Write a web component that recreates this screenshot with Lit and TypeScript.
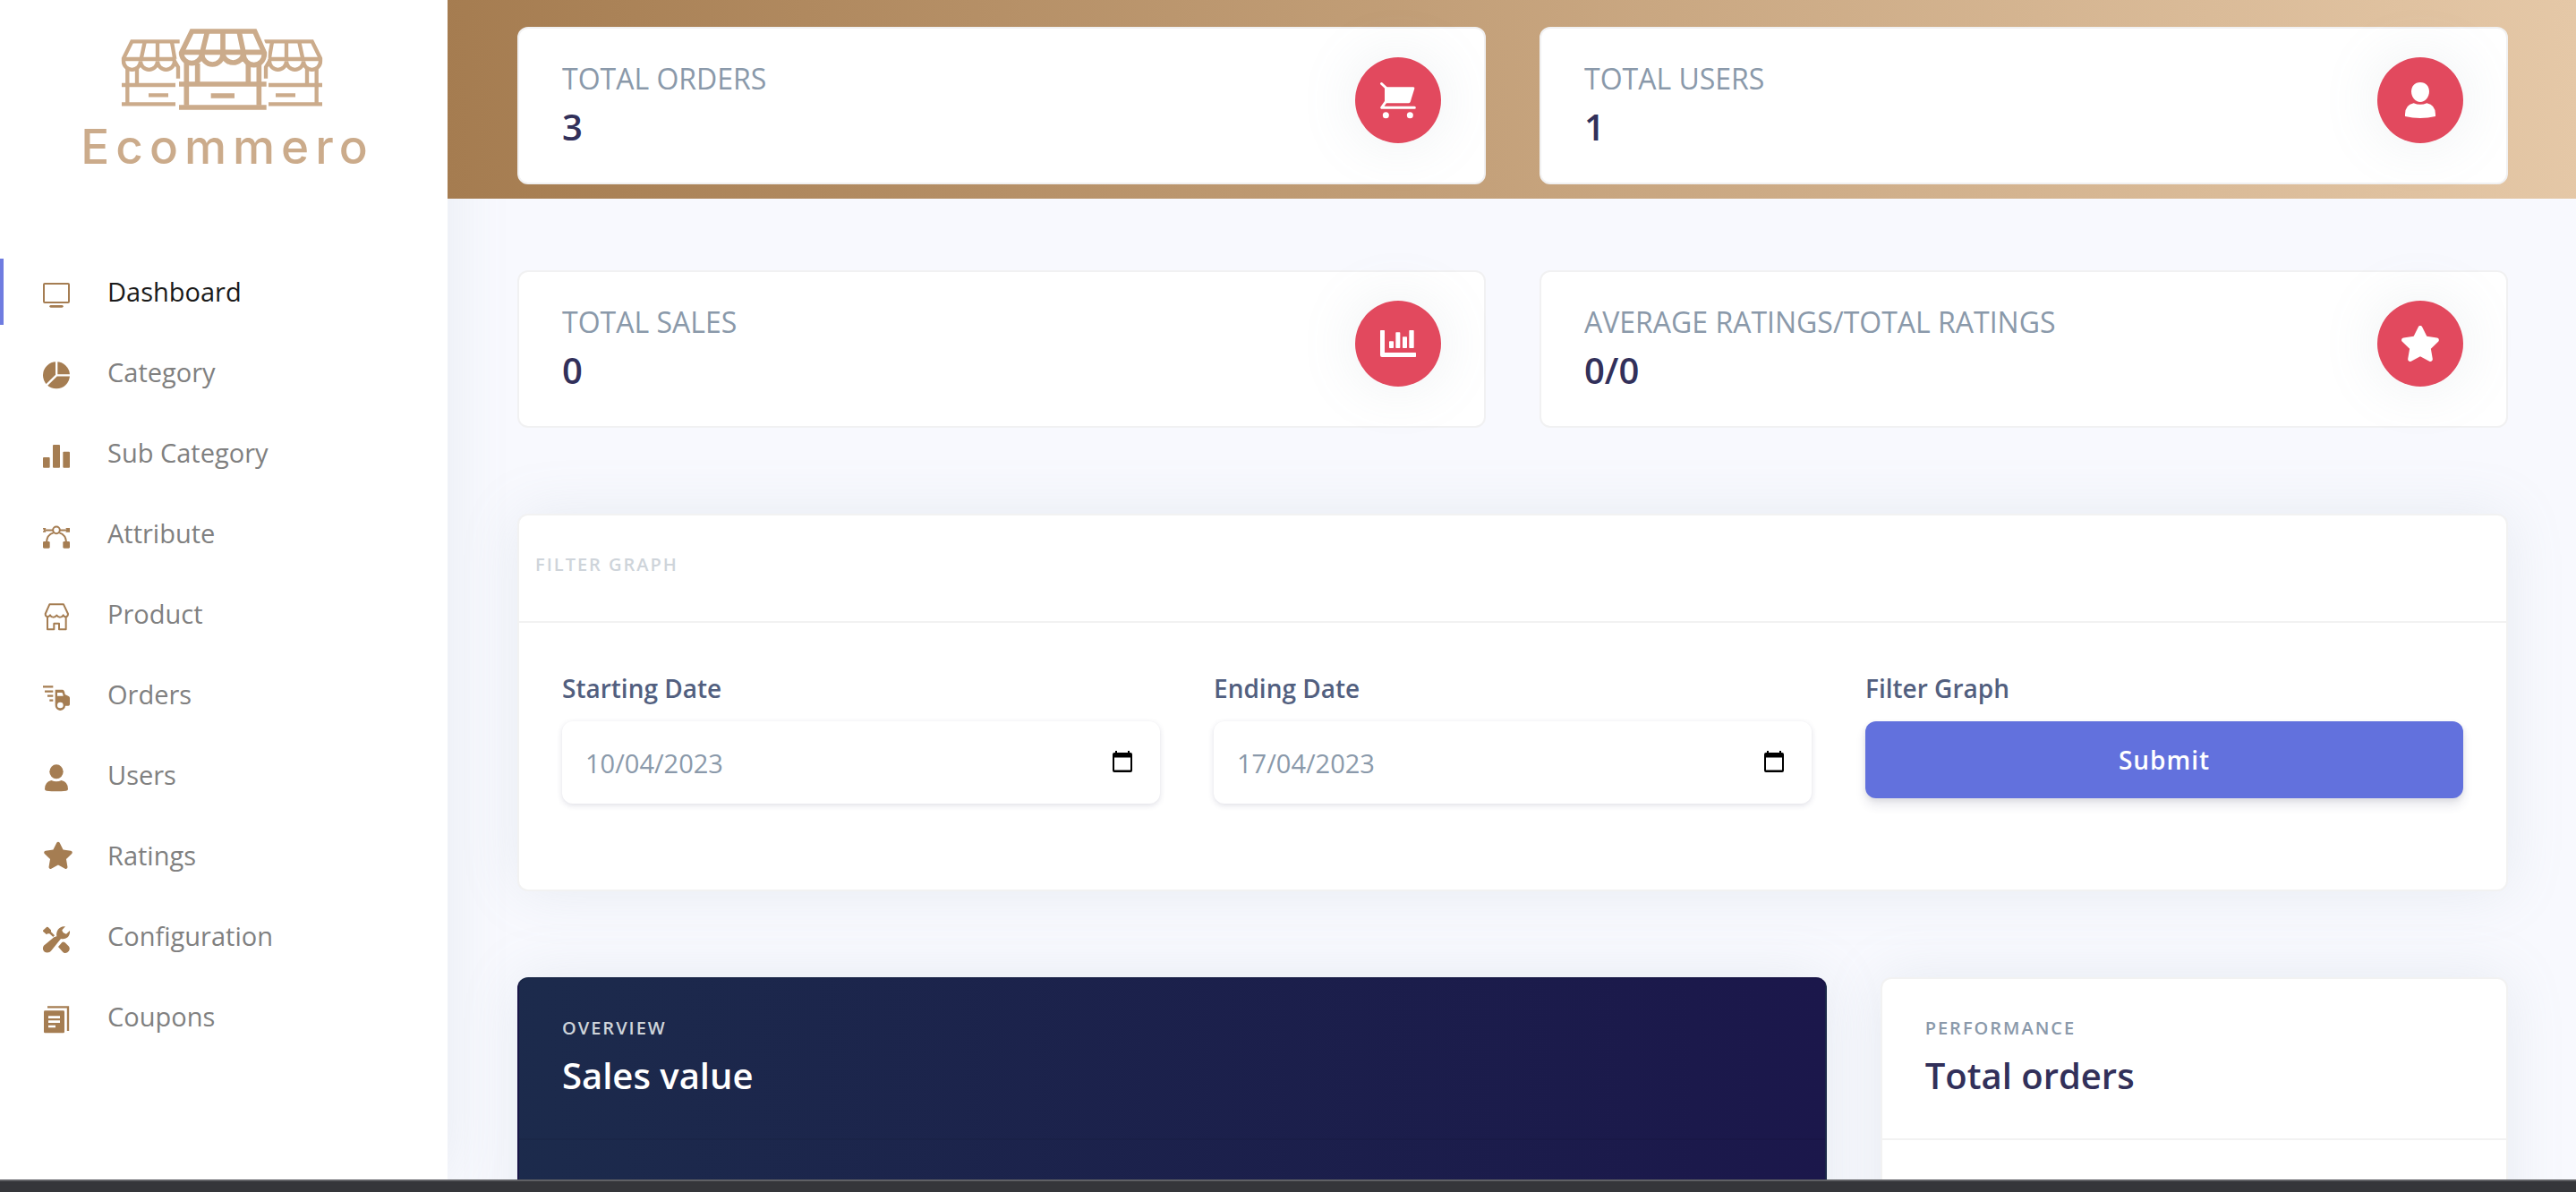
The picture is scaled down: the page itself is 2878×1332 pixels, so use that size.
import { LitElement, html, css, svg, nothing } from "lit";
import type { SVGTemplateResult } from "lit";
import { customElement, property, state } from "lit/decorators.js";
import { classMap } from "lit/directives/class-map.js";

const STAR_PATH =
  "M259.3 17.8L194 150.2 47.9 171.5c-26.2 3.8-36.7 36.1-17.7 54.6l105.7 103-25 145.5c-4.5 26.3 23.2 46 46.4 33.7L288 439.6l130.7 68.7c23.2 12.2 50.9-7.4 46.4-33.7l-25-145.5 105.7-103c19-18.5 8.5-50.8-17.7-54.6L382 150.2 316.7 17.8c-11.7-23.6-45.6-23.9-57.4 0z";

/* Sidebar icons share a 90 x 90 box. */
const navIcons: Record<string, SVGTemplateResult> = {
  screen: svg`
    <rect x="3" y="6" width="84" height="63" rx="3" fill="none" stroke="currentColor" stroke-width="6"/>
    <path d="M26 82H64" stroke="currentColor" stroke-width="8" stroke-linecap="round"/>`,
  pie: svg`
    <circle cx="45" cy="43" r="45" fill="currentColor"/>
    <path d="M45.500 -6V43H96M45.500 43L8 80" fill="none" stroke="#fff" stroke-width="7"/>`,
  bars: svg`
    <g fill="currentColor">
      <rect x="0" y="48" width="23" height="35" rx="3"/>
      <rect x="33" y="6" width="24" height="77" rx="3"/>
      <rect x="67" y="29" width="23" height="54" rx="3"/>
    </g>`,
  vector: svg`
    <g fill="none" stroke="currentColor" stroke-width="6">
      <circle cx="45" cy="22" r="11.500"/>
      <path d="M8 22.500H34M56 22.500H82"/>
      <path d="M12 62C13 46 22 35 35 31M78 62C77 46 68 35 55 31"/>
    </g>
    <g fill="currentColor">
      <path d="M0 15H10L8 22L10 29H0V26L4 22L0 19Z"/>
      <path d="M76 15H90V29H76L80 22Z"/>
      <rect x="0" y="60" width="23" height="23" rx="4"/>
      <rect x="67" y="60" width="23" height="23" rx="4"/>
    </g>`,
  shop: svg`
    <g fill="none" stroke="currentColor" stroke-width="6" stroke-linejoin="round">
      <path d="M22 1H69L84 33C84 44 72 46 68 37C64 46 52 46 46 38C40 46 28 46 24 37C19 46 8 43 8 33Z"/>
      <path d="M15 42V85H37V65H54V85H77V42"/>
    </g>`,
  truck: svg`
    <path d="M0 7H34M6 23H34M15 38H34M22 53H34" stroke="currentColor" stroke-width="7"/>
    <path fill="currentColor" fill-rule="evenodd"
      d="M41 17H65Q72 17 74 33L86 39Q90 41 90 45V66Q90 71 85 71H75A17 17 0 0 1 41 69ZM48 27V38H68L66 29Q65 27 62 27ZM58 59A10 10 0 1 0 58 79A10 10 0 1 0 58 59Z"/>`,
  user: svg`
    <g fill="currentColor">
      <ellipse cx="45" cy="22" rx="23" ry="24"/>
      <path d="M28 51Q45 59 62 51Q84 56 84 80Q84 85 78 86Q45 90 12 86Q6 85 6 80Q6 56 28 51Z"/>
    </g>`,
  star: svg`<path fill="currentColor" transform="translate(0 -13) scale(0.177)" d="${STAR_PATH}"/>`,
  tools: svg`
    <g fill="currentColor">
      <path d="M13 2L17 3L27 13V19L39 31L34 36L22 25H16L12 28L0 17V14Z"/>
      <path d="M46 34C42 14 58 -3 75 1L64 13Q66 24 78 26L90 15C92 34 78 46 60 42L28 82C20 92 4 91 0 78C-1 70 2 65 8 61L37 37Z"/>
      <path d="M51 69L64 54Q68 51 73 54L86 67C95 77 84 92 72 90Q69 89 67 87Z"/>
    </g>`,
  copies: svg`
    <path d="M15 1H84V81" fill="none" stroke="currentColor" stroke-width="7"/>
    <rect x="3" y="13" width="69" height="75" rx="4" fill="currentColor"/>
    <path d="M18 35H57M18 50H57M18 66H42" stroke="#fff" stroke-width="8"/>`,
};

/* Badge icons share a 120 x 120 box. */
const statIcons: Record<string, SVGTemplateResult> = {
  cart: svg`
    <g fill="none" stroke="currentColor" stroke-width="9" stroke-linecap="round" stroke-linejoin="round">
      <path d="M4.500 4.500L19 18"/>
      <path d="M18 66L5 85H115"/>
    </g>
    <path fill="currentColor" d="M15 16H111Q116 16 115 21L101 66Q99 70 95 70H15Z"/>
    <circle cx="19" cy="110" r="10.500" fill="currentColor"/>
    <circle cx="100" cy="110" r="10.500" fill="currentColor"/>`,
  user: svg`
    <g fill="currentColor">
      <path d="M60 0C79 0 90 13 90 31C90 50 76 66 60 66C44 66 30 50 30 31C30 13 41 0 60 0Z"/>
      <path d="M38 70Q60 79 82 70Q111 76 111 107V114Q86 120 60 120Q34 120 9 114V107Q9 76 38 70Z"/>
    </g>`,
  chart: svg`
    <g fill="currentColor">
      <path d="M2 15H13Q15 15 15 17V90H118Q120 90 120 92V103Q120 105 118 105H6Q0 105 0 99V17Q0 15 2 15Z"/>
      <rect x="30" y="52" width="15" height="23" rx="2"/>
      <rect x="52" y="22" width="15" height="53" rx="2"/>
      <rect x="75" y="37" width="15" height="38" rx="2"/>
      <rect x="97" y="15" width="16" height="60" rx="2"/>
    </g>`,
  star: svg`<path fill="currentColor" transform="translate(-7.400 0) scale(0.234)" d="${STAR_PATH}"/>`,
};

const sideShop = svg`
  <g stroke-width="13">
    <path d="M422 108H262L234 165V174A28 28 0 0 0 291 174A28 28 0 0 0 348 174A28 28 0 0 0 405 174L417 194V232"/>
    <path d="M232 167H410M305 110L293 167M348 110V167M396 110L406 167"/>
    <path d="M247 196V316M279 198V250"/>
    <path d="M228 254H408M228 318H408M318 288H384"/>
  </g>`;

@customElement("brand-logo")
export class BrandLogo extends LitElement {
  static styles = css`
    .brand {
      display: flex;
      flex-direction: column;
      align-items: center;
      gap: 8px;
      padding-right: 4px;
      color: #cbab8b;
      text-decoration: none;
    }
    .mark {
      width: 224px;
      height: 92px;
      overflow: visible;
    }
    .name {
      padding-left: 12px;
      font: 500 53px/64px Inter, "Liberation Sans", sans-serif;
      letter-spacing: 7px;
    }
  `;

  render() {
    return html`
      <a class="brand" href="#dashboard">
        <svg class="mark" viewBox="228 65 672 276" fill="none" stroke="currentColor" aria-hidden="true">
          ${sideShop}
          <g transform="translate(1128 0) scale(-1 1)">${sideShop}</g>
          <path d="M414 130L454 60H680L719 130V165L696 190H434L414 165Z" fill="#fff" stroke="none"/>
          <g stroke-width="17">
            <path d="M428 146L463 74H674L706 146V150A35 37 0 0 1 636 150A35 35 0 0 1 567 150A35 35 0 0 1 497 150A35 37 0 0 1 428 150Z"/>
            <path d="M424 144H710M514 78L498 144M567 78V144M622 78L636 144"/>
            <path d="M445 178V322M482 182V248M652 182V248M688 178V322"/>
            <path d="M420 251H713M420 329H713M527 290H606"/>
          </g>
        </svg>
        <span class="name">Ecommero</span>
      </a>
    `;
  }
}

@customElement("stat-card")
export class StatCard extends LitElement {
  @property() label = "";
  @property() value = "";
  @property() icon = "";

  static styles = css`
    .card {
      display: flex;
      justify-content: space-between;
      padding: 32px 48px;
      border: 2px solid #f1f1f2;
      border-radius: 12px;
      background: #fff;
    }
    .label {
      margin: 0;
      font-size: 32px;
      line-height: 48px;
      font-weight: 400;
      text-transform: uppercase;
      color: #8a99aa;
    }
    .value {
      margin: 0;
      font-size: 40px;
      line-height: 60px;
      font-weight: 600;
      color: #32305a;
    }
    .badge {
      display: flex;
      align-items: center;
      justify-content: center;
      width: 96px;
      height: 96px;
      border-radius: 50%;
      background: #e2495e;
      color: #fff;
      box-shadow: 0 0 64px 0 rgba(136, 152, 170, 0.15);
    }
    .glyph {
      width: 40px;
      height: 40px;
      overflow: visible;
    }
  `;

  render() {
    return html`
      <article class="card">
        <div>
          <h2 class="label">${this.label}</h2>
          <p class="value">${this.value}</p>
        </div>
        <div class="badge">
          <svg class="glyph" viewBox="0 0 120 120" aria-hidden="true">${statIcons[this.icon] ?? nothing}</svg>
        </div>
      </article>
    `;
  }
}

const navItems = [
  { label: "Dashboard", icon: "screen" },
  { label: "Category", icon: "pie" },
  { label: "Sub Category", icon: "bars" },
  { label: "Attribute", icon: "vector" },
  { label: "Product", icon: "shop" },
  { label: "Orders", icon: "truck" },
  { label: "Users", icon: "user" },
  { label: "Ratings", icon: "star" },
  { label: "Configuration", icon: "tools" },
  { label: "Coupons", icon: "copies" },
];

@customElement("app-root")
export class AppRoot extends LitElement {
  @state() private active = "Dashboard";
  @state() private start = "10/04/2023";
  @state() private end = "17/04/2023";

  static styles = css`
    :host {
      display: flex;
      flex-direction: column;
      height: 100vh;
      background: #f8f9fe;
      font-family: "Open Sans", "Noto Sans", sans-serif;
      color: #525f7f;
    }
    * {
      box-sizing: border-box;
    }
    .shell {
      display: flex;
      flex: 1;
      min-height: 0;
      overflow: hidden;
    }
    .sidebar {
      flex: 0 0 500px;
      padding-top: 32px;
      background: #fff;
      box-shadow: 0 0 64px 0 rgba(136, 152, 170, 0.15);
    }
    .menu {
      margin: 0;
      padding: 85px 0 0;
      list-style: none;
    }
    .item {
      display: flex;
      align-items: center;
      height: 90px;
    }
    .link {
      display: flex;
      flex: 1;
      align-items: center;
      gap: 42px;
      height: 74px;
      padding-left: 48px;
      font-size: 29px;
      line-height: 44px;
      color: #808080;
      text-decoration: none;
    }
    .link.active {
      padding-left: 44px;
      border-left: 4px solid #6f7ce0;
      color: #1a1a1a;
    }
    .icon {
      width: 30px;
      height: 30px;
      margin-top: 8px;
      overflow: visible;
      color: #a57d52;
    }
    .main {
      flex: 1;
      min-width: 0;
      overflow: auto;
      scrollbar-width: none;
    }
    .band {
      position: relative;
      padding: 30px 76px 16px 78px;
      background: linear-gradient(87deg, #a57c50 0, #e5c8a7 100%);
    }
    .content {
      display: grid;
      gap: 96px;
      padding: 80px 76px 96px 78px;
    }
    .pair {
      display: grid;
      grid-template-columns: 1fr 1fr;
      gap: 60px;
    }
    .card {
      border: 2px solid rgba(0, 0, 0, 0.05);
      border-radius: 12px;
      background: #fff;
      box-shadow: 0 0 64px 0 rgba(136, 152, 170, 0.15);
    }
    .head {
      padding: 40px 48px;
      border-bottom: 2px solid rgba(0, 0, 0, 0.05);
    }
    .head.tight {
      padding-left: 18px;
    }
    .eyebrow {
      margin: 0 0 8px;
      font-size: 20px;
      line-height: 30px;
      font-weight: 600;
      letter-spacing: 2px;
      text-transform: uppercase;
      color: #8a99aa;
    }
    .eyebrow.faint {
      color: #ced4da;
    }
    .title {
      margin: 0;
      font-size: 40px;
      line-height: 60px;
      font-weight: 600;
      color: #32305a;
    }
    .filters {
      display: grid;
      grid-template-columns: repeat(3, 1fr);
      gap: 60px;
      align-items: start;
      padding: 48px 48px 96px;
    }
    .field {
      display: grid;
      gap: 12px;
      font-size: 28px;
    }
    .caption {
      line-height: 50px;
      font-weight: 600;
      color: #525f7f;
    }
    .box {
      display: flex;
      align-items: center;
      height: 92px;
      padding: 0 28px 0 26px;
      border-radius: 12px;
      background: #fff;
      box-shadow: 0 2px 6px rgba(50, 50, 93, 0.15), 0 0 2px rgba(0, 0, 0, 0.02);
    }
    .date {
      flex: 1;
      min-width: 0;
      padding: 0;
      border: 0;
      outline: 0;
      background: none;
      font-family: inherit;
      font-size: 29px;
      color: #8a99aa;
    }
    .picker {
      display: flex;
      padding: 0;
      border: 0;
      background: none;
      color: #000;
    }
    .calendar {
      width: 28px;
      height: 28px;
    }
    .submit {
      height: 86px;
      border: 0;
      border-radius: 12px;
      background: #6271dd;
      font: 600 28px/42px "Open Sans", "Noto Sans", sans-serif;
      letter-spacing: 1px;
      color: #fff;
      box-shadow: 0 8px 12px rgba(50, 50, 93, 0.11), 0 2px 6px rgba(0, 0, 0, 0.08);
    }
    .charts {
      display: grid;
      grid-template-columns: repeat(12, 1fr);
      gap: 60px;
    }
    .sales {
      grid-column: span 8;
      background: linear-gradient(87deg, #1c2b4c 0, #1b174b 100%);
    }
    .sales .title {
      color: #fff;
    }
    .orders {
      grid-column: span 4;
    }
    .plot {
      height: 700px;
    }
    .dock {
      position: relative;
      flex: 0 0 14px;
      border-top: 2px solid #5f6064;
      background: #35363a;
    }
  `;

  private renderDate(id: string, caption: string, value: string, update: (v: string) => void) {
    return html`
      <div class="field">
        <label class="caption" for=${id}>${caption}</label>
        <div class="box">
          <input
            class="date"
            id=${id}
            type="text"
            inputmode="numeric"
            .value=${value}
            @input=${(e: Event) => update((e.target as HTMLInputElement).value)}
          />
          <button class="picker" type="button" aria-label="Open calendar">
            <svg class="calendar" viewBox="0 0 28 28" aria-hidden="true">
              <path
                fill="currentColor"
                fill-rule="evenodd"
                d="M6 1H8V3H20V1H22V3H23Q25 3 25 5V23Q25 25 23 25H5Q3 25 3 23V5Q3 3 5 3H6ZM5 8.500V22.500H23V8.500Z"
              />
            </svg>
          </button>
        </div>
      </div>
    `;
  }

  render() {
    return html`
      <div class="shell">
        <nav class="sidebar" aria-label="Main">
          <brand-logo></brand-logo>
          <ul class="menu">
            ${navItems.map(
              (item) => html`
                <li class="item">
                  <a
                    class=${classMap({ link: true, active: item.label === this.active })}
                    href="#${item.label.toLowerCase().replace(" ", "-")}"
                    @click=${() => (this.active = item.label)}
                  >
                    <svg class="icon" viewBox="0 0 90 90" aria-hidden="true">${navIcons[item.icon]}</svg>
                    <span>${item.label}</span>
                  </a>
                </li>
              `
            )}
          </ul>
        </nav>
        <main class="main">
          <div class="band">
            <div class="pair">
              <stat-card label="Total orders" value="3" icon="cart"></stat-card>
              <stat-card label="Total users" value="1" icon="user"></stat-card>
            </div>
          </div>
          <div class="content">
            <div class="pair">
              <stat-card label="Total sales" value="0" icon="chart"></stat-card>
              <stat-card label="Average ratings/Total ratings" value="0/0" icon="star"></stat-card>
            </div>
            <section class="card">
              <header class="head tight">
                <h2 class="eyebrow faint">Filter graph</h2>
              </header>
              <form class="filters" @submit=${(e: Event) => e.preventDefault()}>
                ${this.renderDate("start", "Starting Date", this.start, (v) => (this.start = v))}
                ${this.renderDate("end", "Ending Date", this.end, (v) => (this.end = v))}
                <div class="field">
                  <label class="caption" for="submit">Filter Graph</label>
                  <button class="submit" id="submit" type="submit">Submit</button>
                </div>
              </form>
            </section>
            <div class="charts">
              <section class="card sales">
                <header class="head">
                  <p class="eyebrow faint">Overview</p>
                  <h2 class="title">Sales value</h2>
                </header>
                <div class="plot"></div>
              </section>
              <section class="card orders">
                <header class="head">
                  <p class="eyebrow">Performance</p>
                  <h2 class="title">Total orders</h2>
                </header>
                <div class="plot"></div>
              </section>
            </div>
          </div>
        </main>
      </div>
      <footer class="dock"></footer>
    `;
  }
}
